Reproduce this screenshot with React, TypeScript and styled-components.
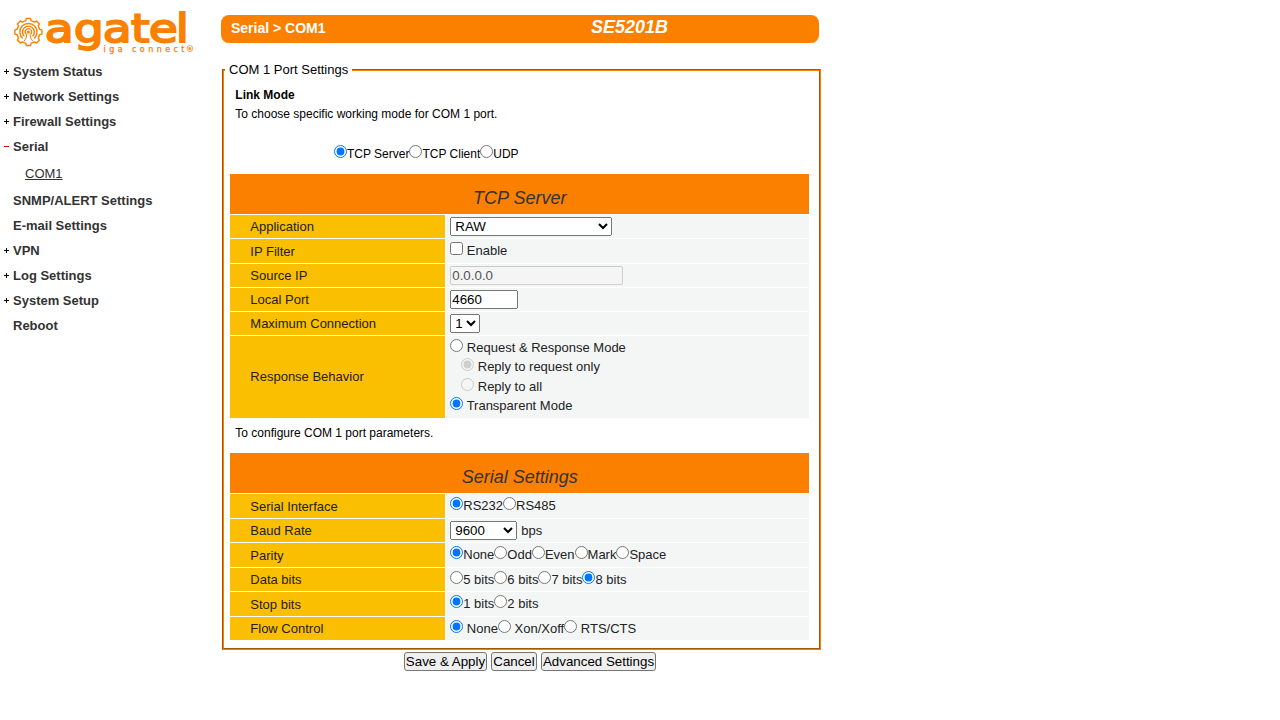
import React from "react";
import styled, { createGlobalStyle } from "styled-components";

const ORANGE = "#fc8000";

const GlobalStyle = createGlobalStyle`
  * { box-sizing: border-box; }
  body {
    margin: 0;
    background: #fff;
    color: #000;
    font-family: "Liberation Sans", Arial, sans-serif;
    font-size: 13px;
  }
`;

const Page = styled.div`
  display: flex;
  width: 1280px;
  height: 720px;
  overflow: hidden;
`;

const Sidebar = styled.aside`
  width: 221px;
  flex: none;
`;

const Logo = styled.svg`
  display: block;
  width: 210px;
  height: 59px;
`;

const NavItem = styled.div`
  display: flex;
  align-items: center;
  height: 25px;
  padding-left: 4px;
  color: #333;
  font-weight: bold;
`;

const NavMark = styled.svg`
  width: 5px;
  height: 5px;
  margin-right: 4px;
  flex: none;
`;

const SubItem = styled.a`
  display: block;
  height: 29px;
  padding-left: 25px;
  line-height: 29px;
  color: #333;
  text-decoration: underline;
`;

const Main = styled.main`
  width: 600px;
  flex: none;
  padding-top: 15px;
`;

const TitleBar = styled.header`
  display: flex;
  width: 598px;
  height: 28px;
  padding-left: 10px;
  border-radius: 8px;
  background: ${ORANGE};
  color: #fff;
`;

const Crumb = styled.div`
  width: 360px;
  font-size: 14px;
  font-weight: bold;
  line-height: 26px;
`;

const Model = styled.div`
  font-size: 18px;
  font-weight: bold;
  font-style: italic;
  line-height: 24px;
`;

const Panel = styled.fieldset`
  width: 599px;
  height: 588px;
  margin: 19px 0 0 1px;
  padding: 0 0 0 6px;
  border: 2px groove ${ORANGE};
`;

const PanelTitle = styled.legend`
  margin-left: -5px;
  padding: 0 4px;
  height: 15px;
  line-height: 15px;
`;

const Note = styled.div<{ $h: number; $top?: number; $bold?: boolean }>`
  height: ${(p) => p.$h}px;
  margin-top: ${(p) => p.$top ?? 0}px;
  line-height: 19px;
  padding-left: 5.3px;
  font-size: 12px;
  font-weight: ${(p) => (p.$bold ? "bold" : "normal")};
`;

const Modes = styled.div`
  height: 29px;
  padding-left: 104px;
  font-size: 12px;
  line-height: 18px;
`;

const Section = styled.section`
  width: 579px;
  display: grid;
  row-gap: 1px;
`;

const SectionTitle = styled.h2`
  height: 40px;
  margin: 0;
  padding: 13px 0 0 0.6px;
  background: ${ORANGE};
  color: #333;
  font-size: 18px;
  font-weight: normal;
  font-style: italic;
  line-height: 22px;
  text-align: center;
`;

const Row = styled.div<{ $h: number }>`
  display: grid;
  grid-template-columns: 215px 363px;
  grid-template-rows: 100%;
  column-gap: 1px;
  height: ${(p) => p.$h}px;
  color: #222;
`;

const Label = styled.div`
  display: flex;
  align-items: center;
  padding-left: 20.3px;
  background: #fabf00;
`;

const TallLabel = styled(Label)`
  padding-bottom: 2px;
`;

const Value = styled.div`
  padding: 2px 4.25px;
  background: #f4f6f5;
  line-height: 19.5px;
  white-space: nowrap;
`;

const TallValue = styled(Value)`
  padding-top: 1.5px;
`;

const ControlValue = styled(Value)`
  display: flex;
  align-items: center;
  gap: 4px;
  padding: 0 4.25px;
`;

const Tick = styled.input`
  width: 13px;
  height: 13px;
  margin: 0;
`;

const Indented = styled.div`
  padding-left: 10.9px;
`;

const Select = styled.select<{ $w: number }>`
  width: ${(p) => p.$w}px;
  height: 19px;
  margin: 0;
  font: 13.333px "Liberation Sans", Arial, sans-serif;
`;

const TextField = styled.input<{ $w: number }>`
  width: ${(p) => p.$w}px;
  height: 19px;
  margin: 0;
  padding: 0;
  font: 13.333px "Liberation Sans", Arial, sans-serif;
`;

const Actions = styled.div`
  display: flex;
  gap: 4px;
  padding: 2px 0 0 183px;
`;

const Button = styled.button<{ $w: number }>`
  width: ${(p) => p.$w}px;
  height: 19px;
  padding: 0;
  border: 1px solid #767676;
  border-radius: 3px;
  background: #efefef;
  color: #000;
  font: 13.333px "Liberation Sans", Arial, sans-serif;
  line-height: 17px;
  white-space: nowrap;
`;

type Mark = "plus" | "minus" | "none";

const MENU: [string, Mark][] = [
  ["System Status", "plus"],
  ["Network Settings", "plus"],
  ["Firewall Settings", "plus"],
  ["Serial", "minus"],
  ["SNMP/ALERT Settings", "none"],
  ["E-mail Settings", "none"],
  ["VPN", "plus"],
  ["Log Settings", "plus"],
  ["System Setup", "plus"],
  ["Reboot", "none"],
];

function MenuMark({ mark }: { mark: Mark }) {
  return (
    <NavMark viewBox="0 0 5 5" shapeRendering="crispEdges">
      {mark !== "none" && (
        <rect x="0" y="2" width="5" height="1" fill={mark === "minus" ? "#f00" : "#000"} />
      )}
      {mark === "plus" && <rect x="2" y="0" width="1" height="5" fill="#000" />}
    </NavMark>
  );
}

const TEETH = [0, 45, 90, 135, 180, 225, 270, 315];

function gearPath() {
  const point = (deg: number, r: number) => {
    const a = (deg * Math.PI) / 180;
    return `${(28.4 + r * Math.cos(a)).toFixed(2)} ${(32 + r * Math.sin(a)).toFixed(2)}`;
  };
  const pts = TEETH.flatMap((t) => [
    point(t - 13, 11.6),
    point(t - 9, 13.7),
    point(t + 9, 13.7),
    point(t + 13, 11.6),
  ]);
  return `M${pts.join("L")}Z`;
}

function BrandLogo() {
  return (
    <Logo viewBox="0 0 210 59">
      <g fill="none" stroke={ORANGE}>
        <path d={gearPath()} strokeWidth="1.4" strokeLinejoin="round" />
        <path d="M22.6 38.4A8.6 8.6 0 1 1 34.2 38.4" strokeWidth="1.4" />
        <path d="M24.2 36.2A5.9 5.9 0 1 1 32.6 36.2" strokeWidth="1.4" />
        <path d="M26 34A3.2 3.2 0 1 1 30.8 34" strokeWidth="1.2" />
        <path d="M26.8 33.5L26.2 38L24 41.2M30 33.5L30.6 38L32.8 41.2" strokeWidth="1" />
      </g>
      <circle cx="28.4" cy="32" r="1.5" fill={ORANGE} />
      <text
        transform="translate(0 42.2) scale(1.28 1.06)"
        x="34.9 57.6 80.2 102.3 116.2 137.4"
        y="0"
        fill={ORANGE}
        stroke={ORANGE}
        strokeWidth="1.7"
        fontFamily="DejaVu Sans"
        fontSize="37"
      >
        agatel
      </text>
      <text
        x="103.5"
        y="52"
        fill={ORANGE}
        stroke={ORANGE}
        strokeWidth="0.25"
        fontFamily="DejaVu Sans"
        fontSize="8"
        textLength="81"
      >
        iga connect
      </text>
      <text x="185.8" y="52.2" fill={ORANGE} fontFamily="DejaVu Sans" fontWeight="bold" fontSize="8.5">
        ®
      </text>
    </Logo>
  );
}

interface Option {
  text: string;
  on?: boolean;
}

function Radios({ name, options }: { name: string; options: Option[] }) {
  return (
    <>
      {options.map((o) => (
        <React.Fragment key={o.text}>
          <Tick type="radio" name={name} defaultChecked={o.on} />
          {o.text}
        </React.Fragment>
      ))}
    </>
  );
}

const SERIAL_ROWS: { label: string; h: number; options?: Option[] }[] = [
  { label: "Serial Interface", h: 24, options: [{ text: "RS232", on: true }, { text: "RS485" }] },
  { label: "Baud Rate", h: 23 },
  {
    label: "Parity",
    h: 24,
    options: [
      { text: "None", on: true },
      { text: "Odd" },
      { text: "Even" },
      { text: "Mark" },
      { text: "Space" },
    ],
  },
  {
    label: "Data bits",
    h: 23,
    options: [{ text: "5 bits" }, { text: "6 bits" }, { text: "7 bits" }, { text: "8 bits", on: true }],
  },
  { label: "Stop bits", h: 24, options: [{ text: "1 bits", on: true }, { text: "2 bits" }] },
  {
    label: "Flow Control",
    h: 23,
    options: [{ text: " None", on: true }, { text: " Xon/Xoff" }, { text: " RTS/CTS" }],
  },
];

export default function App() {
  return (
    <Page>
      <GlobalStyle />
      <Sidebar>
        <BrandLogo />
        <nav>
          {MENU.map(([text, mark]) => (
            <React.Fragment key={text}>
              <NavItem>
                <MenuMark mark={mark} />
                {text}
              </NavItem>
              {text === "Serial" && <SubItem>COM1</SubItem>}
            </React.Fragment>
          ))}
        </nav>
      </Sidebar>
      <Main>
        <TitleBar>
          <Crumb>Serial &gt; COM1</Crumb>
          <Model>SE5201B</Model>
        </TitleBar>
        <Panel>
          <PanelTitle>COM 1 Port Settings</PanelTitle>
          <Note $h={19} $top={9} $bold>
            Link Mode
          </Note>
          <Note $h={40}>To choose specific working mode for COM 1 port.</Note>
          <Modes>
            <Radios
              name="mode"
              options={[{ text: "TCP Server", on: true }, { text: "TCP Client" }, { text: "UDP" }]}
            />
          </Modes>
          <Section>
            <SectionTitle>TCP Server</SectionTitle>
            <Row $h={23}>
              <Label>Application</Label>
              <ControlValue>
                <Select $w={162}>
                  <option>RAW</option>
                </Select>
              </ControlValue>
            </Row>
            <Row $h={24}>
              <Label>IP Filter</Label>
              <Value>
                <Tick type="checkbox" /> Enable
              </Value>
            </Row>
            <Row $h={23}>
              <Label>Source IP</Label>
              <ControlValue>
                <TextField $w={173} defaultValue="0.0.0.0" disabled />
              </ControlValue>
            </Row>
            <Row $h={23}>
              <Label>Local Port</Label>
              <ControlValue>
                <TextField $w={68} defaultValue="4660" />
              </ControlValue>
            </Row>
            <Row $h={23}>
              <Label>Maximum Connection</Label>
              <ControlValue>
                <Select $w={30}>
                  <option>1</option>
                </Select>
              </ControlValue>
            </Row>
            <Row $h={82}>
              <TallLabel>Response Behavior</TallLabel>
              <TallValue>
                <div>
                  <Tick type="radio" name="behavior" /> Request &amp; Response Mode
                </div>
                <Indented>
                  <Tick type="radio" name="reply" disabled defaultChecked /> Reply to request only
                </Indented>
                <Indented>
                  <Tick type="radio" name="reply" disabled /> Reply to all
                </Indented>
                <div>
                  <Tick type="radio" name="behavior" defaultChecked /> Transparent Mode
                </div>
              </TallValue>
            </Row>
          </Section>
          <Note $h={29} $top={6}>
            To configure COM 1 port parameters.
          </Note>
          <Section>
            <SectionTitle>Serial Settings</SectionTitle>
            {SERIAL_ROWS.map((row) => (
              <Row key={row.label} $h={row.h}>
                <Label>{row.label}</Label>
                {row.options ? (
                  <Value>
                    <Radios name={row.label} options={row.options} />
                  </Value>
                ) : (
                  <ControlValue>
                    <Select $w={67}>
                      <option>9600</option>
                    </Select>
                    bps
                  </ControlValue>
                )}
              </Row>
            ))}
          </Section>
        </Panel>
        <Actions>
          <Button $w={83}>Save &amp; Apply</Button>
          <Button $w={46}>Cancel</Button>
          <Button $w={115}>Advanced Settings</Button>
        </Actions>
      </Main>
    </Page>
  );
}
